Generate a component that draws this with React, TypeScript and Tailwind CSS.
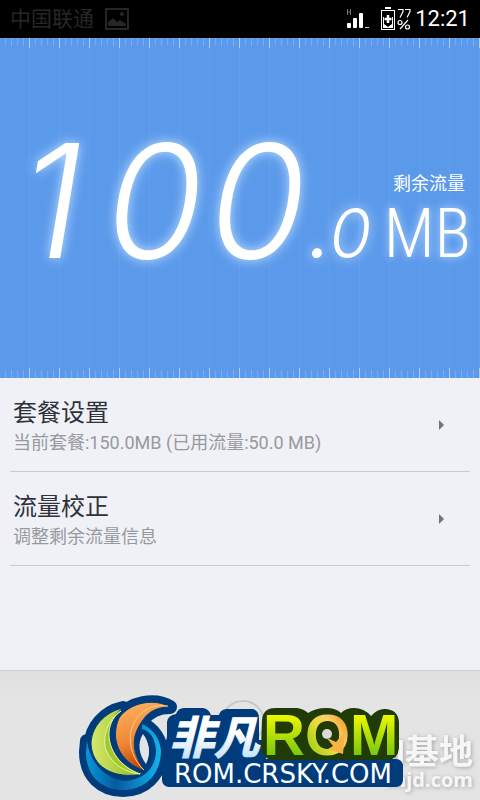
type Setting = { title: string; detail: string };

const settings: Setting[] = [
  { title: "套餐设置", detail: "当前套餐:150.0MB (已用流量:50.0 MB)" },
  { title: "流量校正", detail: "调整剩余流量信息" },
];

function StatusBar() {
  return (
    <header className="flex h-[38px] items-center bg-black px-[10px] text-white">
      <span className="text-[21px] leading-6 text-[#262626]">中国联通</span>
      <svg className="ml-[11px]" width="24" height="22" viewBox="0 0 24 22" fill="none" aria-hidden="true">
        <rect x="1" y="1" width="22" height="20" stroke="#262626" strokeWidth="2" />
        <path d="M3 18v-4l5-4 4 4 3-2 6 4v2z" fill="#262626" />
        <circle cx="17" cy="6" r="2" fill="#262626" />
      </svg>
      <svg className="ml-auto" width="66" height="26" viewBox="0 0 66 26" aria-hidden="true">
        <path d="M1.500 3v6M4.500 3v6M1.500 6H5" stroke="#777" fill="none" />
        <rect x="1" y="17" width="4" height="5" rx="1" fill="#fff" />
        <rect x="7" y="12" width="4" height="10" rx="1" fill="#fff" />
        <rect x="13" y="7" width="4" height="15" rx="1" fill="#fff" />
        <rect x="19" y="21" width="4" height="1" fill="#ccc" />
        <rect x="39" y="1" width="6" height="2" fill="#fff" />
        <rect x="35.500" y="4.500" width="13" height="19" fill="none" stroke="#fff" />
        <path d="M37 11h1v7l4 3 4-3v-7h1v11H37z" fill="#fff" />
        <path d="M42 9v8M38.500 13h7" stroke="#fff" strokeWidth="2.500" />
        <g fill="none" stroke="#fff" strokeWidth="1.200">
          <path d="M52 3.500h5v2l-3 6M59 3.500h5v2l-3 6" />
          <circle cx="54" cy="16.500" r="2" />
          <circle cx="61.500" cy="21" r="2" />
          <path d="M62 14l-8 9" />
        </g>
      </svg>
      <time className="ml-[3px] text-[22px] leading-6">12:21</time>
    </header>
  );
}

function Ruler({ flip = false }: { flip?: boolean }) {
  const id = flip ? "ticks-bottom" : "ticks-top";
  return (
    <svg className={flip ? "block h-[10px] w-full -scale-y-100" : "block h-[10px] w-full"} aria-hidden="true">
      <defs>
        <pattern id={id} width="30" height="10" patternUnits="userSpaceOnUse">
          <g fill="#fff">
            <path d="M5 0h1v7h-1zM17 0h1v7h-1z" opacity="0.18" />
            <path d="M11 0h1v8h-1zM23 0h1v8h-1z" opacity="0.22" />
            <path d="M29 0h1v10h-1z" opacity="0.5" />
          </g>
        </pattern>
      </defs>
      <rect width="100%" height="10" fill={`url(#${id})`} />
    </svg>
  );
}

function Balance() {
  return (
    <section className="flex h-[340px] flex-col bg-[#5b99eb] bg-[repeating-linear-gradient(90deg,transparent_0_29px,#619eed_29px_30px)] text-white">
      <Ruler />
      <div className="flex flex-1 items-end justify-between pr-[9px] pb-[88px]">
        <p className="flex items-baseline font-['Inter',sans-serif] leading-none font-[350] italic [text-shadow:0_0_12px_#c4e4ff]">
          <span className="grid grid-cols-[repeat(3,103px)] text-center text-[158px] leading-[158px]">
            <span>1</span>
            <span>0</span>
            <span>0</span>
          </span>
          <span className="flex text-[68px]">
            <span className="font-medium">.</span>
            <span>0</span>
          </span>
        </p>
        <p className="flex flex-col items-end pb-2">
          <span className="mr-[6px] text-[18px] leading-6">剩余流量</span>
          <span className="font-['Roboto_Condensed',sans-serif] text-[68px] leading-[76px] font-light [text-shadow:0_0_8px_#c4e4ff]">
            MB
          </span>
        </p>
      </div>
      <Ruler flip />
    </section>
  );
}

function SettingRow({ title, detail }: Setting) {
  return (
    <li className="border-b border-[#c9cacd]">
      <button type="button" className="flex h-[93px] w-full items-center pr-[25px] pl-[3px] text-left">
        <span className="flex flex-1 flex-col pt-1">
          <span className="text-[24px] leading-8 text-[#2f323b]">{title}</span>
          <span className="text-[18px] leading-7 text-[#97999f]">{detail}</span>
        </span>
        <svg width="7" height="10" viewBox="0 0 7 10" aria-hidden="true">
          <path d="M1 0l5 5-5 5z" fill="#70737b" />
        </svg>
      </button>
    </li>
  );
}

function SiteLogo() {
  const green = "M123 708C104 712 91 728 91 744C92 766 112 780 144 774C122 768 108 750 109 732C110 722 116 713 123 708Z";
  const orange = "M170 707C155 698 130 702 119 718C110 738 118 762 145 771C130 750 132 735 143 720C149 711 158 707 170 707Z";
  const blue =
    "M142 724C154 729 161 741 161 752C160 776 144 790 123 790C102 790 86 776 86 752L87 741C90 762 104 778 124 781C144 780 156 768 156 750C155 738 150 731 142 729Z";
  return (
    <svg className="absolute bottom-0 left-[76px]" width="404" height="110" viewBox="76 690 404 110" aria-label="非凡ROM">
      <defs>
        <linearGradient id="ice" x1="0" y1="0" x2="0" y2="1">
          <stop offset="0.4" stopColor="#fff" />
          <stop offset="1" stopColor="#b5dcf5" />
        </linearGradient>
        <linearGradient id="lime" x1="0" y1="0" x2="0" y2="1">
          <stop offset="0.2" stopColor="#eef800" />
          <stop offset="0.8" stopColor="#7cc80e" />
        </linearGradient>
        <linearGradient id="gold" gradientUnits="userSpaceOnUse" x1="306" y1="745" x2="344" y2="720">
          <stop offset="0" stopColor="#9fd014" />
          <stop offset="0.45" stopColor="#e9dc3c" />
          <stop offset="0.7" stopColor="#fbd06a" />
          <stop offset="1" stopColor="#f2a52b" />
        </linearGradient>
        <linearGradient id="leaf">
          <stop offset="0" stopColor="#d6e86c" />
          <stop offset="1" stopColor="#8cb81c" />
        </linearGradient>
        <linearGradient id="flame" x1="0" y1="0" x2="0.3" y2="1">
          <stop offset="0" stopColor="#ffb765" />
          <stop offset="0.6" stopColor="#ef8634" />
          <stop offset="1" stopColor="#b94608" />
        </linearGradient>
        <linearGradient id="wave">
          <stop offset="0" stopColor="#0798d9" />
          <stop offset="0.4" stopColor="#075a9e" />
          <stop offset="1" stopColor="#13b4ee" />
        </linearGradient>
        <filter id="soft" x="-10%" y="-20%" width="120%" height="150%">
          <feDropShadow dx="1" dy="1" stdDeviation="2" floodColor="#777" floodOpacity="0.6" />
        </filter>
      </defs>

      <circle cx="243" cy="722" r="21" fill="none" stroke="#c8c8c8" strokeWidth="2" />

      <g fill="#f6f6f6" filter="url(#soft)" fontWeight="700" textAnchor="end">
        <text x="473" y="764" fontSize="34">M基地</text>
        <text x="473" y="787" fontSize="20" fontFamily="'Open Sans', sans-serif">mjd.com</text>
      </g>

      <g fill="#003b7c" stroke="#003b7c" strokeWidth="14" strokeLinejoin="round">
        <path d={blue} />
        <path d={green} />
        <path d={orange} />
      </g>
      <path d="M100 750Q124 784 150 775L154 782Q124 796 98 776Z" fill="#003b7c" />
      <path d={blue} fill="url(#wave)" />
      <path d={green} fill="url(#leaf)" stroke="#003b7c" strokeWidth="1" />
      <path d="M121 711C107 720 102 738 106 750C112 765 127 773 140 774C121 768 108 750 109 732C110 722 115 715 121 711Z" fill="#a2c92c" stroke="#e8f2a0" strokeWidth="1" />
      <path d={orange} fill="url(#flame)" stroke="#003b7c" strokeWidth="1" />
      <path d="M168 706C147 703 134 717 131 731C128 746 134 761 144 770" fill="none" stroke="#ffc991" strokeWidth="1" />
      <path d="M143 734C137 743 139 755 146 764C151 754 149 741 143 734Z" fill="#e3e4e5" />

      <path d="M176 714Q178 708 184 708H203Q209 709 211 715H219Q220 710 226 709H253Q259 711 259 718V740H266V770H163V745Q167 741 167 735V722Q168 715 176 714Z" fill="#003b7c" />
      <text x="169" y="754" fontSize="45" fontWeight="700" fontStyle="italic" fill="url(#ice)" stroke="url(#ice)" strokeWidth="1">
        非凡
      </text>

      <rect x="162" y="759" width="241" height="28" rx="7" fill="#003b7c" />
      <path d="M262 720Q263 708 275 708H297Q304 709 308 713Q316 708 326 708Q336 708 341 713Q346 708 354 708Q364 708 371 716Q378 708 386 709Q398 710 399 722V748Q398 759 388 760H272Q262 758 261 748Z" fill="#203b06" />
      <g fontFamily="'Liberation Sans', sans-serif" fontSize="58" fontWeight="700" fill="url(#lime)">
        <text x="263" y="755">
          R<tspan fill="url(#gold)">O</tspan>M
        </text>
      </g>
      <circle cx="327" cy="734" r="5" fill="#dadada" />
      <path d="M327 738l9 4 9-10-2 22-15-5 5-3z" fill="#f7b443" />

      <text x="283" y="783" fontFamily="'DejaVu Sans', sans-serif" fontSize="26" textAnchor="middle" fill="#fff">
        ROM.CRSKY.COM
      </text>
    </svg>
  );
}

export default function App() {
  return (
    <div className="flex min-h-screen flex-col bg-[#f0f1f6] font-['Roboto','Noto_Sans_CJK_SC',sans-serif]">
      <StatusBar />
      <Balance />
      <main className="flex-1">
        <ul className="mx-[10px]">
          {settings.map((s) => (
            <SettingRow key={s.title} {...s} />
          ))}
        </ul>
      </main>
      <footer className="relative h-[130px] border-t border-[#cfcfd2] bg-linear-to-b from-[#dfdfdf] to-[#e4e4e4] to-20%">
        <SiteLogo />
      </footer>
    </div>
  );
}
